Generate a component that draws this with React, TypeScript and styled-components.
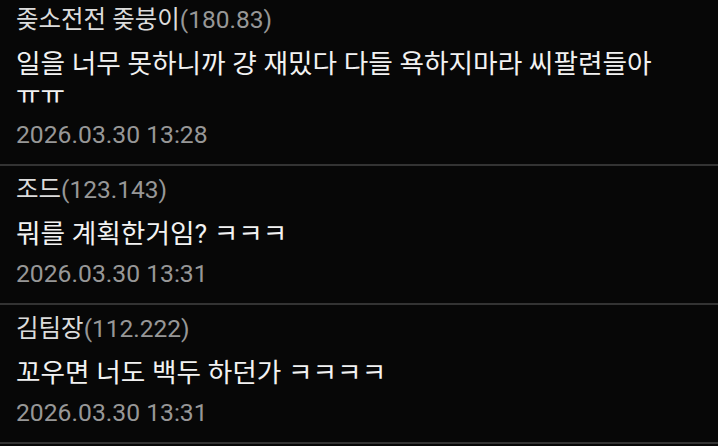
import styled, {createGlobalStyle} from "styled-components";

const GlobalStyle = createGlobalStyle`
	html, body {
		margin: 0;
		padding: 0;
		background: #070707;
	}
	body {
		font-family: Roboto, "Noto Sans CJK KR", sans-serif;
		overflow: hidden;
	}
`

interface Comment {
	name: string
	ip: string
	text: string
	date: string
}

const comments: Comment[] = [
	{
		name: "좆소전전 좆붕이",
		ip: "180.83",
		text: "일을 너무 못하니까 걍 재밌다 다들 욕하지마라 씨팔련들아 ㅠㅠ",
		date: "2026.03.30 13:28",
	},
	{
		name: "조드",
		ip: "123.143",
		text: "뭐를 계획한거임? ㅋㅋㅋ",
		date: "2026.03.30 13:31",
	},
	{
		name: "김팀장",
		ip: "112.222",
		text: "꼬우면 너도 백두 하던가 ㅋㅋㅋㅋ",
		date: "2026.03.30 13:31",
	},
]

/**
 * Comment list
 */
export default function App() {
	return (
		<>
			<GlobalStyle/>
			<List>
				{comments.map((c, i) => (
					<Item key={i}>
						<Author>
							{c.name}<Ip>({c.ip})</Ip>
						</Author>
						<Body>{c.text}</Body>
						<Date>{c.date}</Date>
					</Item>
				))}
			</List>
		</>
	)
}

const List = styled.div`
	display: flex;
	flex-direction: column;
	margin-top: -4px;
	background: #070707;
`

const Item = styled.div`
	display: flex;
	flex-direction: column;
	padding: 8px 16px 13px 16px;
	border-bottom: 2px solid #333333;
`

const Author = styled.div`
	font-size: 24.5px;
	line-height: 32px;
	color: #dcdcdc;
	white-space: nowrap;
`

const Ip = styled.span`
	color: #979797;
`

const Body = styled.div`
	margin-top: 13px;
	font-size: 26.7px;
	line-height: 31px;
	color: #f2f2f2;
	word-break: keep-all;
`

const Date = styled.div`
	margin-top: 8px;
	font-size: 24.7px;
	line-height: 32px;
	color: #979797;
`
